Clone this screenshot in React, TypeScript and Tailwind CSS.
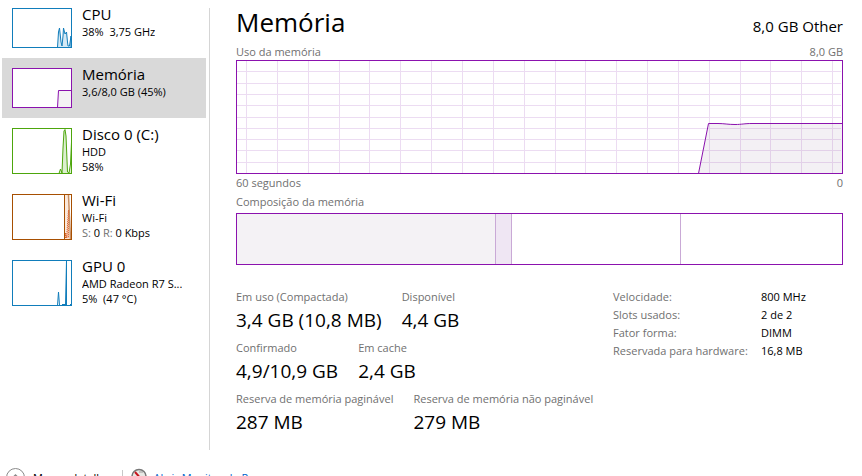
import type { ReactNode } from "react";

interface Resource {
  name: string;
  lines: ReactNode[];
  color: string;
  tall?: boolean;
  active?: boolean;
  graph: ReactNode;
}

const BLUE = "#117dbb";
const PURPLE = "#8b12ae";
const GREEN = "#4da60c";
const BROWN = "#a74f01";

const resources: Resource[] = [
  {
    name: "CPU",
    lines: ["38%\u00a0 3,75 GHz"],
    color: BLUE,
    graph: (
      <path
        d="M45.500 39.500 L46.500 24 L47.500 20 L49 34 L50 38 L51 28 L51.500 20 L53 26 L54.500 24 L55.500 34 L56 38 L57.500 38 L59 28 V39.500"
        fill="#d5e9f4"
        stroke={BLUE}
      />
    ),
  },
  {
    name: "Memória",
    lines: ["3,6/8,0 GB (45%)"],
    color: PURPLE,
    active: true,
    graph: <path d="M45.500 39.500 L46.500 22.500 H59.500 V39.500 Z" fill="#f4f2f4" stroke={PURPLE} />,
  },
  {
    name: "Disco 0 (C:)",
    lines: ["HDD", "58%"],
    color: GREEN,
    tall: true,
    graph: (
      <path
        d="M47 45.500 L48.500 41 L50 45 L51 20 L52 3 L53 1.500 L54 8 L55.500 44 L57 45 L58.500 36 L59.500 14 V45.500 Z"
        fill="#dcefcf"
        stroke={GREEN}
      />
    ),
  },
  {
    name: "Wi-Fi",
    lines: [
      "Wi-Fi",
      <>
        <span className="text-[#707070]">S:</span> 0 <span className="text-[#707070]">R:</span> 0 Kbps
      </>,
    ],
    color: BROWN,
    tall: true,
    graph: (
      <>
        <path d="M52.500 45.500 V0.500 H56.500 L58.500 45.500 Z" fill="#fbe9dc" />
        <path d="M52.500 0 V46" stroke={BROWN} />
        <path d="M56.500 1 L58.500 45" stroke="#c98f62" strokeWidth="1.500" />
        <path d="M53.500 44 V39 L54.500 44 L56.500 16 L56.500 44" fill="#f3b596" stroke="#d9622b" strokeDasharray="1 1" />
      </>
    ),
  },
  {
    name: "GPU 0",
    lines: ["AMD Radeon R7 S...", "5%\u00a0 (47 °C)"],
    color: BLUE,
    tall: true,
    graph: (
      <>
        <path d="M53.500 45 L54.500 1 V45" fill="#a9d0e6" stroke={BLUE} />
        <path d="M45.500 45.500 L46.500 32 L47.500 45.500 M50 44.500 H53 M58 44.500 H60" stroke={BLUE} />
      </>
    ),
  },
];

const stats = [
  [
    { label: "Em uso (Compactada)", value: "3,4 GB (10,8 MB)" },
    { label: "Disponível", value: "4,4 GB" },
  ],
  [
    { label: "Confirmado", value: "4,9/10,9 GB" },
    { label: "Em cache", value: "2,4 GB" },
  ],
  [
    { label: "Reserva de memória paginável", value: "287 MB" },
    { label: "Reserva de memória não paginável", value: "279 MB" },
  ],
];

const details = [
  ["Velocidade:", "800 MHz"],
  ["Slots usados:", "2 de 2"],
  ["Fator forma:", "DIMM"],
  ["Reservada para hardware:", "16,8 MB"],
];

const composition = [
  { name: "in-use", share: 259, look: "border-r border-[#c9a9d6] bg-[#f4f2f5]" },
  { name: "modified", share: 16, look: "border-r border-[#c9a9d6] bg-[#efe6f3]" },
  { name: "standby", share: 169, look: "border-r border-[#c9a9d6]" },
  { name: "free", share: 161, look: "" },
];

const columns = Array.from({ length: 20 }, (_, i) => Math.round(10 + i * 30.85) + 0.5);
const rows = Array.from({ length: 9 }, (_, i) => Math.round((i + 1) * 11.3) + 0.5);

function ResourceItem({ name, lines, color, tall, active, graph }: Resource) {
  return (
    <li>
      <button
        type="button"
        className={`flex w-full items-start gap-2.5 px-2.5 py-2.5 text-left ${active ? "bg-[#d9d9d9]" : "bg-white"}`}
      >
        <svg width="60" height={tall ? 46 : 40} className="shrink-0 bg-white" fill="none" aria-hidden="true">
          {graph}
          <rect x="0.5" y="0.5" width="59" height={tall ? 45 : 39} stroke={color} />
        </svg>
        <span className="-mt-1 block min-w-0">
          <span className="block text-[15px] leading-5">{name}</span>
          {lines.map((line, i) => (
            <span key={i} className="block truncate text-[11px] leading-[15px]">
              {line}
            </span>
          ))}
        </span>
      </button>
    </li>
  );
}

function UsageChart() {
  return (
    <svg
      viewBox="0 0 607 114"
      preserveAspectRatio="none"
      className="block h-[114px] w-full"
      fill="none"
      role="img"
      aria-label="Uso da memória"
    >
      <g stroke="#ecdcf2">
        {columns.map((x) => (
          <path key={x} d={`M${x} 1 V113`} />
        ))}
        {rows.map((y) => (
          <path key={y} d={`M1 ${y} H605`} />
        ))}
      </g>
      <path
        d="M462.500 113.500 L472.500 63.500 H482 C488 63.500 492 64.500 499 64.500 C506 64.500 508 63.500 516 63.500 H606.500 V113.500 Z"
        fill="#8b6f92"
        fillOpacity="0.1"
        stroke={PURPLE}
      />
      <rect x="0.5" y="0.5" width="606" height="113" stroke={PURPLE} />
    </svg>
  );
}

export default function App() {
  return (
    <div className="flex h-screen flex-col overflow-hidden bg-white font-['Open_Sans','Noto_Sans',sans-serif] text-black">
      <div className="flex shrink-0 pt-2">
        <nav className="w-[210px] shrink-0 border-r border-[#d5d5d5] pr-[3px] pl-0.5">
          <ul className="-mt-2.5">
            {resources.map((r) => (
              <ResourceItem key={r.name} {...r} />
            ))}
          </ul>
        </nav>

        <main className="h-[442px] min-w-0 flex-1 pr-[19px] pl-[26px]">
          <header className="flex h-9 items-center justify-between">
            <h1 className="-mt-2 text-[26px] leading-9">Memória</h1>
            <p className="text-[15px] leading-5">8,0 GB Other</p>
          </header>

          <div className="flex justify-between text-[11px] leading-4 text-[#707070]">
            <span>Uso da memória</span>
            <span>8,0 GB</span>
          </div>
          <UsageChart />
          <div className="mt-px flex justify-between text-[11px] leading-4 text-[#707070]">
            <span>60 segundos</span>
            <span>0</span>
          </div>

          <h2 className="mt-[3px] text-[11px] leading-4 text-[#707070]">Composição da memória</h2>
          <div className="mt-[3px] flex h-[52px] border border-[#8b12ae]">
            {composition.map((c) => (
              <div key={c.name} className={c.look} style={{ width: `${(c.share / 605) * 100}%` }} />
            ))}
          </div>

          <div className="mt-[23px] flex justify-between">
            <div className="space-y-[5px] whitespace-nowrap">
              {stats.map((row, i) => (
                <dl key={i} className="flex gap-5">
                  {row.map((s) => (
                    <div key={s.label}>
                      <dt className="text-[11px] leading-[18px] text-[#707070]">{s.label}</dt>
                      <dd className="text-[19px] leading-7">{s.value}</dd>
                    </div>
                  ))}
                </dl>
              ))}
            </div>
            <table className="w-[230px] self-start text-left text-[11px] leading-[18px]">
              <tbody>
                {details.map(([label, value]) => (
                  <tr key={label}>
                    <th scope="row" className="w-[148px] p-0 font-normal whitespace-nowrap text-[#707070]">
                      {label}
                    </th>
                    <td className="p-0">{value}</td>
                  </tr>
                ))}
              </tbody>
            </table>
          </div>
        </main>
      </div>

      <footer className="mt-[18px] flex shrink-0 items-start pl-1.5 text-[11px] leading-5">
        <button type="button" className="flex gap-2">
          <svg width="19" height="19" fill="none" stroke="#8a8a8a" aria-hidden="true">
            <circle cx="9.500" cy="9.500" r="9" />
            <path d="M5.500 11 L9.500 7 L13.500 11" strokeWidth="1.500" />
          </svg>
          Menos detalhes
        </button>
        <span className="mt-0.5 ml-2 h-4 w-px bg-[#c8c8c8]" />
        <a href="#resmon" className="ml-2 flex gap-1.5 text-[#0066cc]">
          <svg width="16" height="16" fill="none" aria-hidden="true">
            <circle cx="8" cy="8.500" r="7" fill="#e8e8e4" stroke="#777" strokeWidth="1.500" />
            <path d="M4 4 L11 12" stroke="#c8141e" strokeWidth="2" />
            <path d="M8 4 L12 4" stroke="#9a9a9a" />
          </svg>
          Abrir Monitor de Recursos
        </a>
      </footer>
    </div>
  );
}
